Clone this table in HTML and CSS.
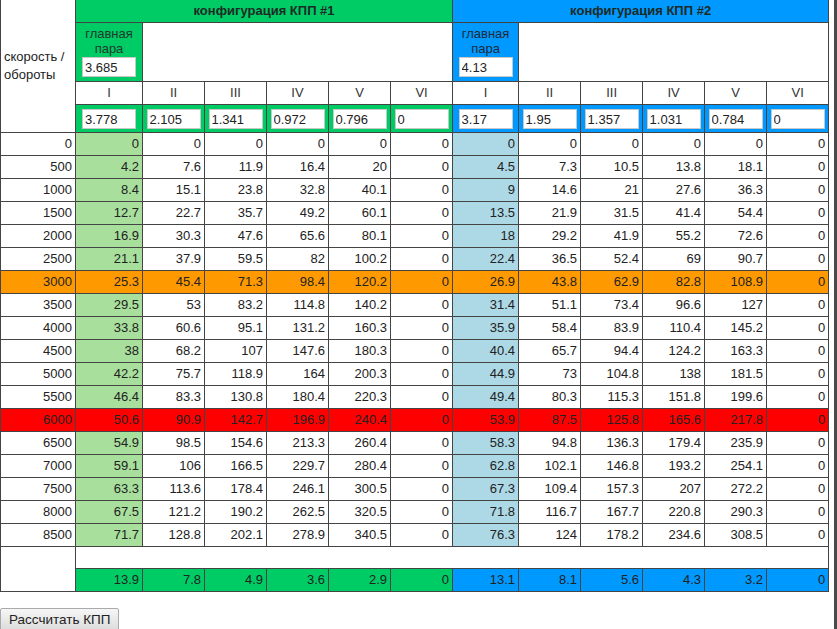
FILE: index.html
```html
<!DOCTYPE html>
<html lang="ru">
<head>
<meta charset="utf-8">
<title>КПП</title>
<link rel="stylesheet" href="styles.css">
</head>
<body>
<div class="page">
<table class="gear">
<colgroup>
<col class="c-label"><col class="c-first"><col class="c-n"><col class="c-n"><col class="c-n"><col class="c-n"><col class="c-n">
<col class="c-first2"><col class="c-n"><col class="c-n"><col class="c-n"><col class="c-n"><col class="c-n">
</colgroup>
<thead>
<tr class="r-title">
<td class="label" rowspan="4">скорость / обороты</td>
<td class="title g" colspan="6">конфигурация КПП #1</td>
<td class="title b" colspan="6">конфигурация КПП #2</td>
</tr>
<tr class="r-main">
<td class="main g"><div class="main-text">главная<br>пара</div><input class="inp" type="text" value="3.685"></td>
<td class="blank" colspan="5"></td>
<td class="main b"><div class="main-text">главная<br>пара</div><input class="inp" type="text" value="4.13"></td>
<td class="blank" colspan="5"></td>
</tr>
<tr class="r-roman">
<td>I</td><td>II</td><td>III</td><td>IV</td><td>V</td><td>VI</td>
<td>I</td><td>II</td><td>III</td><td>IV</td><td>V</td><td>VI</td>
</tr>
<tr class="r-inputs">
<td class="g"><input class="inp" type="text" value="3.778"></td>
<td class="g"><input class="inp" type="text" value="2.105"></td>
<td class="g"><input class="inp" type="text" value="1.341"></td>
<td class="g"><input class="inp" type="text" value="0.972"></td>
<td class="g"><input class="inp" type="text" value="0.796"></td>
<td class="g"><input class="inp" type="text" value="0"></td>
<td class="b"><input class="inp" type="text" value="3.17"></td>
<td class="b"><input class="inp" type="text" value="1.95"></td>
<td class="b"><input class="inp" type="text" value="1.357"></td>
<td class="b"><input class="inp" type="text" value="1.031"></td>
<td class="b"><input class="inp" type="text" value="0.784"></td>
<td class="b"><input class="inp" type="text" value="0"></td>
</tr>
</thead>
<tbody class="data">
<tr><td>0</td><td class="lg">0</td><td>0</td><td>0</td><td>0</td><td>0</td><td>0</td><td class="lb">0</td><td>0</td><td>0</td><td>0</td><td>0</td><td>0</td></tr>
<tr><td>500</td><td class="lg">4.2</td><td>7.6</td><td>11.9</td><td>16.4</td><td>20</td><td>0</td><td class="lb">4.5</td><td>7.3</td><td>10.5</td><td>13.8</td><td>18.1</td><td>0</td></tr>
<tr><td>1000</td><td class="lg">8.4</td><td>15.1</td><td>23.8</td><td>32.8</td><td>40.1</td><td>0</td><td class="lb">9</td><td>14.6</td><td>21</td><td>27.6</td><td>36.3</td><td>0</td></tr>
<tr><td>1500</td><td class="lg">12.7</td><td>22.7</td><td>35.7</td><td>49.2</td><td>60.1</td><td>0</td><td class="lb">13.5</td><td>21.9</td><td>31.5</td><td>41.4</td><td>54.4</td><td>0</td></tr>
<tr><td>2000</td><td class="lg">16.9</td><td>30.3</td><td>47.6</td><td>65.6</td><td>80.1</td><td>0</td><td class="lb">18</td><td>29.2</td><td>41.9</td><td>55.2</td><td>72.6</td><td>0</td></tr>
<tr><td>2500</td><td class="lg">21.1</td><td>37.9</td><td>59.5</td><td>82</td><td>100.2</td><td>0</td><td class="lb">22.4</td><td>36.5</td><td>52.4</td><td>69</td><td>90.7</td><td>0</td></tr>
<tr class="orange"><td>3000</td><td>25.3</td><td>45.4</td><td>71.3</td><td>98.4</td><td>120.2</td><td>0</td><td>26.9</td><td>43.8</td><td>62.9</td><td>82.8</td><td>108.9</td><td>0</td></tr>
<tr><td>3500</td><td class="lg">29.5</td><td>53</td><td>83.2</td><td>114.8</td><td>140.2</td><td>0</td><td class="lb">31.4</td><td>51.1</td><td>73.4</td><td>96.6</td><td>127</td><td>0</td></tr>
<tr><td>4000</td><td class="lg">33.8</td><td>60.6</td><td>95.1</td><td>131.2</td><td>160.3</td><td>0</td><td class="lb">35.9</td><td>58.4</td><td>83.9</td><td>110.4</td><td>145.2</td><td>0</td></tr>
<tr><td>4500</td><td class="lg">38</td><td>68.2</td><td>107</td><td>147.6</td><td>180.3</td><td>0</td><td class="lb">40.4</td><td>65.7</td><td>94.4</td><td>124.2</td><td>163.3</td><td>0</td></tr>
<tr><td>5000</td><td class="lg">42.2</td><td>75.7</td><td>118.9</td><td>164</td><td>200.3</td><td>0</td><td class="lb">44.9</td><td>73</td><td>104.8</td><td>138</td><td>181.5</td><td>0</td></tr>
<tr><td>5500</td><td class="lg">46.4</td><td>83.3</td><td>130.8</td><td>180.4</td><td>220.3</td><td>0</td><td class="lb">49.4</td><td>80.3</td><td>115.3</td><td>151.8</td><td>199.6</td><td>0</td></tr>
<tr class="red"><td>6000</td><td>50.6</td><td>90.9</td><td>142.7</td><td>196.9</td><td>240.4</td><td>0</td><td>53.9</td><td>87.5</td><td>125.8</td><td>165.6</td><td>217.8</td><td>0</td></tr>
<tr><td>6500</td><td class="lg">54.9</td><td>98.5</td><td>154.6</td><td>213.3</td><td>260.4</td><td>0</td><td class="lb">58.3</td><td>94.8</td><td>136.3</td><td>179.4</td><td>235.9</td><td>0</td></tr>
<tr><td>7000</td><td class="lg">59.1</td><td>106</td><td>166.5</td><td>229.7</td><td>280.4</td><td>0</td><td class="lb">62.8</td><td>102.1</td><td>146.8</td><td>193.2</td><td>254.1</td><td>0</td></tr>
<tr><td>7500</td><td class="lg">63.3</td><td>113.6</td><td>178.4</td><td>246.1</td><td>300.5</td><td>0</td><td class="lb">67.3</td><td>109.4</td><td>157.3</td><td>207</td><td>272.2</td><td>0</td></tr>
<tr><td>8000</td><td class="lg">67.5</td><td>121.2</td><td>190.2</td><td>262.5</td><td>320.5</td><td>0</td><td class="lb">71.8</td><td>116.7</td><td>167.7</td><td>220.8</td><td>290.3</td><td>0</td></tr>
<tr><td>8500</td><td class="lg">71.7</td><td>128.8</td><td>202.1</td><td>278.9</td><td>340.5</td><td>0</td><td class="lb">76.3</td><td>124</td><td>178.2</td><td>234.6</td><td>308.5</td><td>0</td></tr>
<tr><td rowspan="2"></td><td colspan="12"></td></tr>
<tr class="totals"><td class="g">13.9</td><td class="g">7.8</td><td class="g">4.9</td><td class="g">3.6</td><td class="g">2.9</td><td class="g">0</td><td class="b">13.1</td><td class="b">8.1</td><td class="b">5.6</td><td class="b">4.3</td><td class="b">3.2</td><td class="b">0</td></tr>
</tbody>
</table>
<div class="actions"><button class="calc" type="button">Рассчитать КПП</button></div>
</div>
</body>
</html>
```
FILE: styles.css
```css
html, body {
  margin: 0;
  padding: 0;
  background: #fff;
}
body {
  font-family: "Liberation Sans", Arial, sans-serif;
  font-size: 13px;
  color: #222;
}
.page {
  width: 834px;
  min-height: 100vh;
  border-right: 3px solid #4a4a4a;
}
.gear {
  border-collapse: collapse;
  table-layout: fixed;
  width: 828px;
}
.c-label { width: 75px; }
.c-first { width: 67px; }
.c-first2 { width: 66px; }
.c-n { width: 62px; }
.gear td {
  border: 1px solid #444;
  padding: 0 3px;
  line-height: 22px;
  height: 22px;
  box-sizing: border-box;
}
.r-title td { border-top: 0; }
.label {
  text-align: left;
  line-height: 18px !important;
  vertical-align: middle;
  padding-left: 3px;
}
.title {
  text-align: center;
  font-weight: bold;
  color: #1e2a24;
}
.g { background: #00cc66; }
.b { background: #0099ff; }
.r-main td { height: 59px; }
.main {
  text-align: center;
  vertical-align: top;
  line-height: 15px !important;
  padding: 3px 0 0 !important;
}
.main-text { line-height: 15px; margin-bottom: 1px; }
.main.g .main-text { color: #1f3a2a; }
.main.b .main-text { color: #1d2b3a; }
.blank { background: #fff; }
.r-roman td {
  text-align: center;
  color: #333;
}
.r-inputs td {
  height: 28px;
  text-align: center;
  padding: 0;
  vertical-align: middle;
}
.inp {
  box-sizing: border-box;
  width: 54px;
  height: 20px;
  margin: 0;
  padding: 0 2px;
  border: 1px solid #c8c8c8;
  background: #fff;
  font-family: "Liberation Sans", Arial, sans-serif;
  font-size: 13px;
  color: #222;
  vertical-align: middle;
}
.data td { text-align: right; }
.data .lg { background: #a8df9c; }
.data .lb { background: #add8e6; }
.data .orange td { background: #ff9900; }
.data .red td { background: #ff0000; }
.actions {
  padding-top: 16px;
}
.calc {
  font-family: "Liberation Sans", Arial, sans-serif;
  font-size: 13.5px;
  color: #222;
  height: 23px;
  padding: 0 8px;
  border: 1px solid #aaa;
  border-radius: 2px;
  background: linear-gradient(#f6f6f6, #dcdcdc);
}
```
